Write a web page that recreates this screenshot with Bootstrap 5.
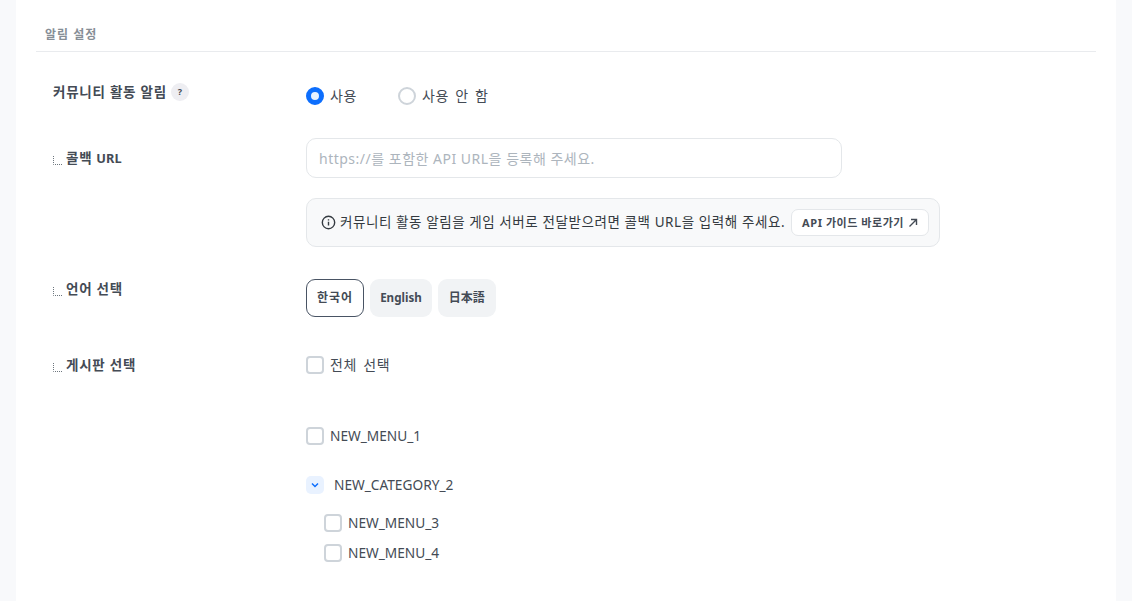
<!DOCTYPE html>
<html lang="ko">
<head>
<meta charset="UTF-8">
<title>알림 설정</title>
<link rel="stylesheet" href="https://cdn.jsdelivr.net/npm/bootstrap@5.3.0/dist/css/bootstrap.min.css">
<script src="https://cdn.jsdelivr.net/npm/bootstrap@5.3.0/dist/js/bootstrap.bundle.min.js"></script>
<style>
html, body { height: 601px; overflow: hidden; }
body { background: #f8f9fb; font-family: "Noto Sans", "Noto Sans CJK KR", sans-serif; color: #444b55; font-size: 14px; }
.panel { margin: 0 16px; height: 601px; background: #fff; padding: 0 20px; }
.sec-head { height: 52px; padding: 26px 0 0 9px; border-bottom: 1px solid #e9ebee; font-size: 12px; letter-spacing: 1px; line-height: 18px; font-weight: 600; color: #868e96; }
.set-row { display: grid; grid-template-columns: 253px 1fr; padding-left: 17px; }
.set-label { font-size: 13.5px; letter-spacing: .75px; font-weight: 700; color: #444b55; line-height: 20px; display: flex; align-items: center; height: 20px; }
.set-label .en { font-size: 12.8px; letter-spacing: 0; margin-left: 4px; }
.tree-mark { width: 9px; height: 9px; margin-right: 4px; margin-top: 5px; flex: none; }
.help-dot { width: 18px; height: 18px; border-radius: 50%; background: #eeeef2; font-size: 9px; letter-spacing: 0; font-weight: 700; display: flex; align-items: center; justify-content: center; margin-left: 4px; }
.opt { display: flex; align-items: center; gap: 6px; font-size: 14px; line-height: 18px; color: #444b55; letter-spacing: .6px; word-spacing: 2px; }
.opt.latin { font-size: 13.7px; letter-spacing: 0; word-spacing: 0; }
.opt .form-check-input { width: 18px; height: 18px; margin: 0; flex: none; border: 2px solid #ced4da; box-shadow: none; }
.opt .form-check-input[type=checkbox] { border-radius: 4px; }
.opt .form-check-input:checked { background-color: #e8f1ff; border: 5px solid #0d6efd; background-image: none; }
.radio-group { display: flex; gap: 41px; padding-top: 5px; }
.url-input { width: 536px; height: 40px; border: 1px solid #e4e7ea; border-radius: 10px; font-size: 14px; letter-spacing: .5px; padding: 0 12px; color: #444b55; }
.url-input::placeholder { color: #adb5bd; }
.guide-box { width: 634px; height: 49px; margin-top: 20px; background: #f8f9fa; border: 1px solid #e4e7ea; border-radius: 10px; padding: 0 10px 0 14px; display: flex; align-items: center; font-size: 13.5px; letter-spacing: .58px; white-space: nowrap; color: #343a40; }
.guide-btn { height: 27px; padding: 0 10px; font-size: 11px; letter-spacing: .55px; font-weight: 700; border: 1px solid #e4e7ea; border-radius: 7px; background: #fff; color: #444b55; margin-left: 6px; display: flex; align-items: center; gap: 4px; line-height: 1; }
.lang-group { display: flex; gap: 6px; }
.lang-btn { height: 38px; border-radius: 9px; border: 1px solid transparent; background: #f1f3f5; font-size: 12px; letter-spacing: 1px; font-weight: 700; color: #444b55; padding: 0 10px; line-height: 1; }
.lang-btn.latin { font-size: 11.6px; letter-spacing: 0; padding: 0 9px; }
.lang-btn.cjk { letter-spacing: 0; }
.lang-btn.on { background: #fff; border-color: #495464; }
.fold-row { display: flex; align-items: center; margin-top: 31px; gap: 10px; line-height: 18px; font-size: 13.7px; }
.fold-btn { width: 18px; height: 18px; border: 0; border-radius: 5px; background: #e9f2ff; padding: 0; display: flex; align-items: center; justify-content: center; }
.child-list { display: flex; flex-direction: column; margin: 20px 0 0 18px; gap: 12px; }
</style>
</head>
<body>
<div class="panel">
  <div class="sec-head">알림 설정</div>

  <div class="set-row" style="padding-top:30px">
    <div class="set-label">커뮤니티 활동 알림 <span class="help-dot">?</span></div>
    <div class="radio-group">
      <label class="opt"><input class="form-check-input" type="radio" name="use" checked>사용</label>
      <label class="opt"><input class="form-check-input" type="radio" name="use">사용 안 함</label>
    </div>
  </div>

  <div class="set-row" style="padding-top:33px">
    <div class="set-label" style="margin-top:10px">
      <svg class="tree-mark" viewBox="0 0 9 9"><path d="M.5 0v8.5H9" fill="none" stroke="#6c757d" stroke-dasharray="1 1"/></svg>콜백<span class="en">URL</span>
    </div>
    <div>
      <input class="form-control url-input" type="text" placeholder="https://를 포함한 API URL을 등록해 주세요.">
      <div class="guide-box">
        <svg width="15" height="15" viewBox="0 0 16 16" class="me-1 flex-shrink-0" fill="none" stroke="#343a40" stroke-width="1.5"><circle cx="8" cy="8" r="6.6"/><path d="M8 7.2v4M8 4.4v1.4"/></svg>
        커뮤니티 활동 알림을 게임 서버로 전달받으려면 콜백 URL을 입력해 주세요.
        <button class="guide-btn" type="button">API 가이드 바로가기
          <svg width="10" height="10" viewBox="0 0 10 10" fill="none" stroke="#444b55" stroke-width="1.4"><path d="M1.5 8.5l7-7M3 1.5h5.5V7"/></svg>
        </button>
      </div>
    </div>
  </div>

  <div class="set-row" style="padding-top:32px">
    <div class="set-label">
      <svg class="tree-mark" viewBox="0 0 9 9"><path d="M.5 0v8.5H9" fill="none" stroke="#6c757d" stroke-dasharray="1 1"/></svg>언어 선택
    </div>
    <div class="lang-group">
      <button class="lang-btn on" type="button">한국어</button>
      <button class="lang-btn latin" type="button">English</button>
      <button class="lang-btn cjk" type="button">日本語</button>
    </div>
  </div>

  <div class="set-row" style="padding-top:39px">
    <div class="set-label" style="margin-top:-1px">
      <svg class="tree-mark" viewBox="0 0 9 9"><path d="M.5 0v8.5H9" fill="none" stroke="#6c757d" stroke-dasharray="1 1"/></svg>게시판 선택
    </div>
    <div>
      <label class="opt"><input class="form-check-input" type="checkbox">전체 선택</label>
      <label class="opt latin" style="margin-top:53px"><input class="form-check-input" type="checkbox">NEW_MENU_1</label>
      <div class="fold-row">
        <button class="fold-btn" type="button"><svg width="8" height="6" viewBox="0 0 8 6" fill="none" stroke="#0d6efd" stroke-width="1.5"><path d="M1 1.5l3 3 3-3"/></svg></button>
        NEW_CATEGORY_2
      </div>
      <div class="child-list">
        <label class="opt latin"><input class="form-check-input" type="checkbox">NEW_MENU_3</label>
        <label class="opt latin"><input class="form-check-input" type="checkbox">NEW_MENU_4</label>
      </div>
    </div>
  </div>
</div>
</body>
</html>
